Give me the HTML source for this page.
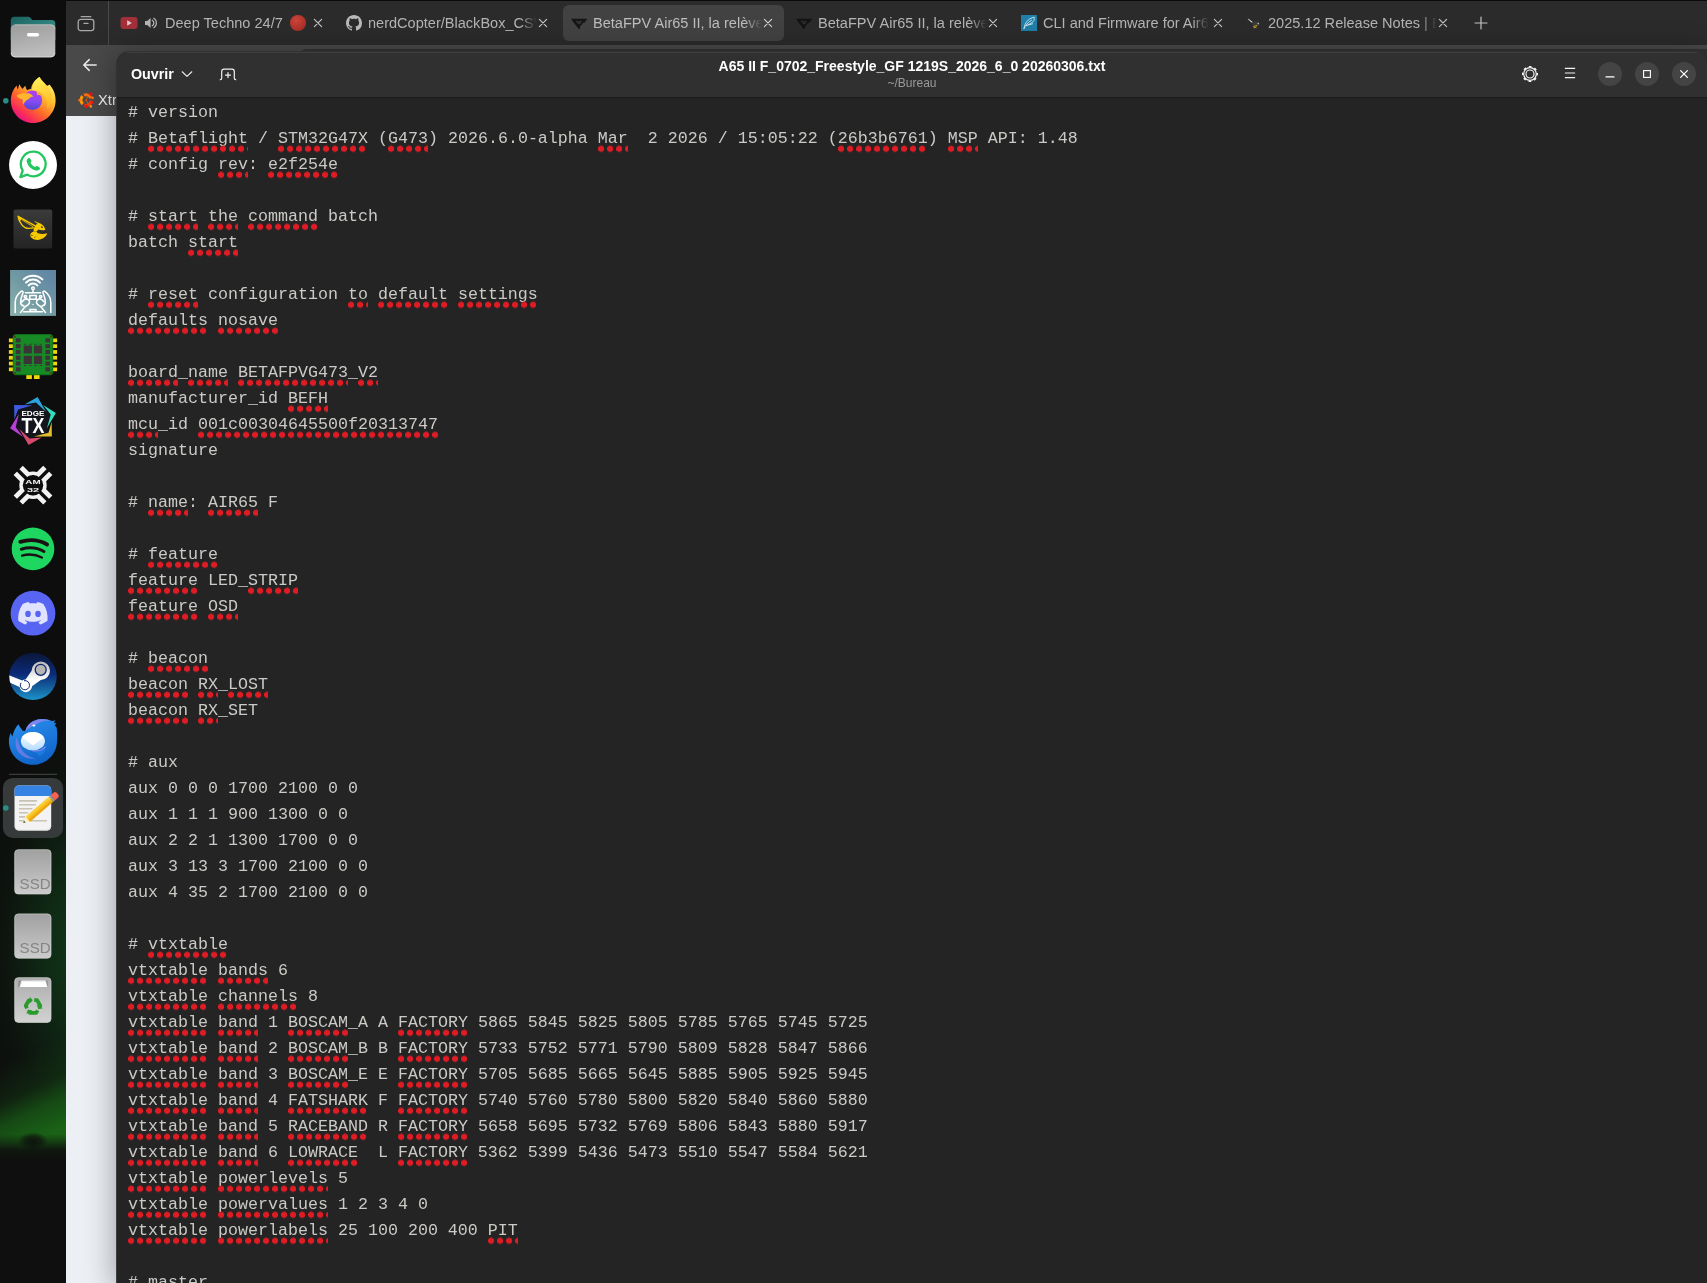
<!DOCTYPE html>
<html lang="fr">
<head>
<meta charset="utf-8">
<title>A65 II F_0702_Freestyle_GF 1219S_2026_6_0 20260306.txt</title>
<style>
*{box-sizing:border-box;margin:0;padding:0}
html,body{width:1707px;height:1283px;overflow:hidden;background:#0d0d0d}
body{position:relative;font-family:"Liberation Sans",sans-serif;color:#fff}
.abs{position:absolute}
/* ---------- dock ---------- */
#dock{will-change:transform;position:absolute;left:0;top:0;width:66px;height:1283px;background:#0d0d0d;overflow:hidden}
#dock .glow{position:absolute;left:0;top:0;width:66px;height:1283px;
 background:
  radial-gradient(ellipse 15px 9px at 33px 1141px, rgba(13,15,13,.9) 0, rgba(13,15,13,.6) 55%, rgba(13,15,13,0) 100%),
  linear-gradient(180deg, rgba(14,15,14,0) 1134px, rgba(14,15,14,.9) 1150px, #0e0f0e 1162px, #0e0f0e 1283px),
  linear-gradient(155deg, rgba(22,80,22,0) 81%, rgba(22,78,22,.3) 84%, rgba(23,84,22,.85) 85.800%, rgba(26,98,22,1) 88%, rgba(26,100,22,1) 100%),
  radial-gradient(ellipse 120px 230px at 86px 950px, rgba(17,62,26,.95) 0, rgba(15,48,22,.72) 40%, rgba(13,30,16,.36) 70%, rgba(14,14,14,0) 100%);}
.ic{position:absolute;left:9px;width:48px;height:48px}
.ic svg{display:block;width:48px;height:48px}
/* ---------- firefox ---------- */
#ff{will-change:transform;position:absolute;left:66px;top:0;width:1641px;height:1283px;background:#eceff4;overflow:hidden}
#tabbar{position:absolute;left:0;top:0;width:1641px;height:45px;background:#2b2b2b;border-top:1px solid #0a0a0a}
#navbar{position:absolute;left:0;top:45px;width:1641px;height:71px;background:#494949}
.tab{position:absolute;top:0;height:45px;font-size:14.55px;color:#b4b4b4;white-space:nowrap}
.tab .t{position:absolute;top:13px;left:0;line-height:18px;overflow:hidden}
.tabx{position:absolute;top:17px;width:10px;height:10px}
.fade{-webkit-mask-image:linear-gradient(90deg,#000 0,#000 90%,transparent 100%);mask-image:linear-gradient(90deg,#000 0,#000 90%,transparent 100%)}
/* ---------- editor ---------- */
#ed{will-change:transform;position:absolute;left:117px;top:52px;width:1590px;height:1231px;background:#242424;border-radius:12px 12px 0 0;overflow:hidden;
 box-shadow:0 0 0 1px rgba(50,50,50,.92),0 3px 30px 3px rgba(0,0,0,.33)}
#hb{position:absolute;left:0;top:0;width:1590px;height:46px;background:#303030;border-bottom:1px solid #1c1c1c;box-shadow:inset 0 1px 0 rgba(255,255,255,.07)}
#title{position:absolute;left:0;width:1590px;top:6px;text-align:center;font-weight:bold;font-size:14px;line-height:17px;color:#fff;white-space:nowrap}
#sub{position:absolute;left:0;width:1590px;top:24px;text-align:center;font-size:12px;line-height:14px;color:#9a9a9a}
#code{transform:translateY(.3px);position:absolute;left:11px;top:48px;font-family:"Liberation Mono",monospace;font-size:16.667px;color:#cbcac6}
.ln{height:26px;line-height:26px;white-space:pre}
.ln u{text-decoration:none;position:relative;display:inline-block;height:26px;vertical-align:top}
.ln u::after{content:"";position:absolute;left:0;right:0;top:18.900px;height:7px;
 background:radial-gradient(circle at 3.1px 3.5px,#e01b24 0,#e01b24 2.75px,rgba(224,27,36,0) 3.45px) 0 0/9px 7px repeat-x}
.wb{position:absolute;top:10px;width:24px;height:24px;border-radius:12px;background:#444444}
</style>
</head>
<body>
<div id="dock"><div class="glow"></div>
<svg class="abs" style="left:0;top:0" width="66" height="1283" viewBox="0 0 66 1283" font-family="Liberation Sans, sans-serif">
<defs>
 <linearGradient id="gFoldB" x1="0" y1="0" x2="1" y2="1"><stop offset="0" stop-color="#1b615e"/><stop offset="1" stop-color="#3f9c97"/></linearGradient>
 <linearGradient id="gFoldF" x1="0" y1="0" x2="0.3" y2="1"><stop offset="0" stop-color="#9b9b9b"/><stop offset="1" stop-color="#bdbdbd"/></linearGradient>
 <linearGradient id="gFx" x1="0.85" y1="0.1" x2="0.2" y2="0.95"><stop offset="0" stop-color="#fff36a"/><stop offset="0.3" stop-color="#ffbd2e"/><stop offset="0.6" stop-color="#ff6a2a"/><stop offset="0.85" stop-color="#f92a5a"/><stop offset="1" stop-color="#e3118d"/></linearGradient>
 <linearGradient id="gFxFlame" x1="0.3" y1="0" x2="0.7" y2="1"><stop offset="0" stop-color="#fff45a"/><stop offset="1" stop-color="#ffb727"/></linearGradient>
 <linearGradient id="gFxGlobe" x1="0.5" y1="0" x2="0.4" y2="1"><stop offset="0" stop-color="#b23df0"/><stop offset="0.5" stop-color="#8b4af5"/><stop offset="1" stop-color="#4f47cf"/></linearGradient>
 <linearGradient id="gBf" x1="0" y1="0" x2="0" y2="1"><stop offset="0" stop-color="#3b3b3b"/><stop offset="1" stop-color="#242424"/></linearGradient>
 <linearGradient id="gRc" x1="0" y1="1" x2="1" y2="0"><stop offset="0" stop-color="#8cb3ad"/><stop offset="0.5" stop-color="#7098a2"/><stop offset="1" stop-color="#5d83a6"/></linearGradient>
 <linearGradient id="gSteam" x1="0" y1="0" x2="0" y2="1"><stop offset="0" stop-color="#0a173a"/><stop offset="0.45" stop-color="#0c2a78"/><stop offset="0.75" stop-color="#15639f"/><stop offset="1" stop-color="#1c93cc"/></linearGradient>
 <linearGradient id="gSteamW" x1="0" y1="0" x2="0" y2="1"><stop offset="0" stop-color="#b9b9b9"/><stop offset="0.6" stop-color="#ffffff"/></linearGradient>
 <linearGradient id="gTb" x1="0.2" y1="0" x2="0.6" y2="1"><stop offset="0" stop-color="#2a8fee"/><stop offset="1" stop-color="#0f63c8"/></linearGradient>
 <linearGradient id="gEnv" x1="0" y1="0" x2="0" y2="1"><stop offset="0" stop-color="#ffffff"/><stop offset="1" stop-color="#b4dcff"/></linearGradient>
 <linearGradient id="gSsd" x1="0" y1="0" x2="0" y2="1"><stop offset="0" stop-color="#a0a0a0"/><stop offset="1" stop-color="#cbcbcb"/></linearGradient>
 <linearGradient id="gTrash" x1="0" y1="0" x2="0" y2="1"><stop offset="0" stop-color="#adadad"/><stop offset="1" stop-color="#d2d2d2"/></linearGradient>
 <linearGradient id="gPen" x1="0" y1="0" x2="1" y2="1"><stop offset="0" stop-color="#fbd03c"/><stop offset="0.5" stop-color="#f8c228"/><stop offset="0.51" stop-color="#eaa50a"/><stop offset="1" stop-color="#eaa50a"/></linearGradient>
</defs>
<!-- files -->
<g>
 <path d="M10.8 20.2a3.5 3.5 0 0 1 3.5-3.5h13.2c1.6 0 2.4.4 3.4 1.6l.9 1.1c.5.5 1 .7 1.8.7h18.2a3.5 3.5 0 0 1 3.5 3.5V40H10.8z" fill="url(#gFoldB)"/>
 <rect x="10.8" y="24.6" width="44.5" height="32.6" rx="4.2" fill="url(#gFoldF)"/>
 <path d="M14.8 24.9h36.5a3.7 3.7 0 0 1 3.7 3.7" stroke="#cdcdcd" stroke-width=".7" fill="none"/>
 <path d="M11.2 53a3.9 3.9 0 0 0 3.8 3.9h36a3.9 3.9 0 0 0 3.9-3.9" stroke="#dcdcdc" stroke-width=".8" fill="none"/>
 <rect x="26.9" y="32.9" width="12.2" height="3.6" rx="1.8" fill="#fff"/>
</g>
<!-- firefox -->
<g>
 <circle cx="5.800" cy="100.800" r="2.800" fill="#2a8d88"/>
 <path d="M39.600 77.100C41 80.500 44 82.500 46.500 85.500C47.500 85.800 48.600 85.600 49.400 84.600C53.400 88.800 55.600 94.500 55.600 100.500C55.600 113 45.500 123 33.200 123C20.800 123 10.800 113 10.800 100.500C10.800 95 12.800 89.500 16.600 85.500C16.800 87 17.200 88.300 18 89.500C18.300 87.300 18.800 85.600 19.500 84.200C20.200 86 21.200 87.600 22.600 89C23.200 87.800 24.200 86.600 25.400 85.800C25.600 87.500 26.200 89 27.200 90.300C28.400 89.600 29.800 89 31.200 88.800C31.600 84.400 35 79.500 39.600 77.100Z" fill="url(#gFx)"/>
 <path d="M39.600 77.100C41 80.500 44 82.500 46.500 85.500C49.800 89.400 51.600 93.800 51.400 98.600C51.300 102.800 49.600 106.400 46.600 109C48.400 104.400 47.600 99.400 44.600 95.800C42.400 93.200 39.400 91.400 36.200 90.800C34.800 90.500 33.400 90.500 32 90.700C32 85.600 35.200 79.700 39.600 77.100Z" fill="url(#gFxFlame)" opacity=".92"/>
 <circle cx="32.400" cy="100.300" r="9.700" fill="url(#gFxGlobe)"/>
 <path d="M16.500 95.800C19 93.400 23 92.700 26 93.500C28.500 92.500 31.200 93.500 33.600 96.600C31.200 96.800 29.700 97.800 28.500 99.200C26.100 100 24.300 102 23.700 104.600C22.700 102.800 22.500 101 22.900 99.400C20.400 99.200 18.200 97.900 16.500 95.800Z" fill="#ffb52e"/>
 <path d="M35.800 91.600C38.800 91.900 41.400 93.600 42.600 96C40.700 95 38.700 94.900 37.200 95.400C37.200 94 36.700 92.700 35.800 91.600Z" fill="#ffa62e"/>
</g>
<!-- whatsapp -->
<g>
 <circle cx="33" cy="165" r="24" fill="#fff"/>
 <path d="M33.300 151.700a12.300 12.300 0 1 1-6 23l-6.900 2.400 2.300-6.600a12.300 12.300 0 0 1 10.600-18.800z" fill="none" stroke="#22c55e" stroke-width="2.300" stroke-linejoin="round"/>
 <path d="M28.300 158.300c.5-.5 1.300-.5 1.700.1l1.300 2c.3.500.2 1.100-.2 1.500l-.7.700c.9 1.900 2.600 3.600 4.800 4.500l.8-.8c.4-.4 1-.4 1.500-.1l2 1.300c.6.400.7 1.200.2 1.700-1 1.100-2.500 1.700-4 1.300-4.400-1.100-8.100-4.800-9-9-.2-1.200.4-2.300 1.600-3.200z" fill="#22c55e"/>
</g>
<!-- betaflight -->
<g>
 <rect x="13.500" y="209.400" width="38.700" height="39.200" rx="2" fill="url(#gBf)"/>
 <g fill="none" stroke="#f6c900" stroke-linecap="round" stroke-linejoin="round">
  <path d="M18.100 216.300L35.200 225.900M18.100 216.300C18.600 219 19.200 220.500 19.900 221.700C21.200 224.400 23 226.600 25.100 227.600C27.600 228.800 30.400 228.500 33.400 227.900" stroke-width="1.350"/>
  <path d="M21.600 219.600L33.200 226.900" stroke-width=".8"/>
  <path d="M35 221.600L38.400 223.200" stroke-width=".9"/>
 </g>
 <path d="M18.100 216.300l3.600 1.600-1.700 3.500z" fill="#f6c900"/>
 <path d="M37.800 222.800C41.600 223.200 44.400 226 45.300 229.700C43 230.500 40.600 230.300 38.500 229.500L36.600 231.200L33.600 231.200C33.400 229.600 33.800 228.200 34.600 227C35.600 225.400 36.600 224.200 37.800 222.800Z" fill="#f6c900"/>
 <ellipse cx="41.900" cy="227.100" rx="1.050" ry=".7" fill="#2a2a2a" transform="rotate(25 41.900 227.100)"/>
 <path d="M30.300 234.600C30.800 232.200 33.400 230.800 36.400 231.200L37.400 233C40.600 234.200 44.200 234.200 47.200 233.300C46 237.200 42 239.900 37.400 239.900C33.300 239.900 29.800 237.800 30.300 234.600Z" fill="#f6c900"/>
 <path d="M31 235.300l1.700.2M34.400 237.800l1.300-1.300" stroke="#3a3207" stroke-width=".7" fill="none"/>
</g>
<!-- rc -->
<g>
 <rect x="10.100" y="270" width="45.900" height="45.900" fill="url(#gRc)"/>
 <g fill="none" stroke="#fff" stroke-width="1.550" stroke-linecap="round" stroke-linejoin="round">
  <path stroke-width="2" d="M23.600 279.400a13.600 13.600 0 0 1 18.800 0M26 282.600a9.600 9.600 0 0 1 14 0M28.600 285.400a5.800 5.800 0 0 1 8.800 0"/>
  <circle cx="33" cy="288.200" r="1.300"/><path d="M33 289.700v2.600"/>
  <path d="M25.400 292.700h15.200"/>
  <rect x="29.800" y="295.400" width="6.400" height="3.800"/>
  <circle cx="25.400" cy="296.600" r="1.200"/><circle cx="40.600" cy="296.600" r="1.200"/>
  <path d="M15.200 312.400v-9.600c0-4.600 2.400-8.800 6-11.400 1-.7 2.200.3 1.800 1.400-1.500 3.700-2.300 6-2.400 9.400 0 2.100 1.200 3.400 3.300 3.800"/>
  <path d="M50.800 312.400v-9.600c0-4.600-2.400-8.800-6-11.400-1-.7-2.200.3-1.800 1.400 1.500 3.700 2.300 6 2.400 9.400 0 2.100-1.200 3.400-3.300 3.800"/>
  <path d="M20.600 312.400l4.200-5.400 3.400-2.400c1.800-1.300 1.800-4-.1-5.100-1.500-.9-3.400-.6-4.800.9l-1.400 1.500"/>
  <path d="M45.400 312.400l-4.200-5.400-3.400-2.400c-1.800-1.300-1.800-4 .1-5.100 1.500-.9 3.400-.6 4.800.9l1.400 1.500"/>
  <path d="M23.600 311.800h18.800M30 311.400v-1.800h6v1.800"/>
 </g>
 <circle cx="33" cy="304.400" r=".7" fill="#fff"/>
</g>
<!-- pcb -->
<g>
 <g fill="#f2d80a"><rect x="8.900" y="338.500" width="4.400" height="3.700"/><rect x="8.900" y="344.300" width="4.400" height="3.700"/><rect x="8.900" y="350.100" width="4.400" height="3.700"/><rect x="8.900" y="355.900" width="4.400" height="3.700"/><rect x="8.900" y="361.700" width="4.400" height="3.700"/><rect x="8.900" y="367.500" width="4.400" height="3.700"/>
 <rect x="52.700" y="338.500" width="4.400" height="3.700"/><rect x="52.700" y="344.300" width="4.400" height="3.700"/><rect x="52.700" y="350.100" width="4.400" height="3.700"/><rect x="52.700" y="355.900" width="4.400" height="3.700"/><rect x="52.700" y="361.700" width="4.400" height="3.700"/><rect x="52.700" y="367.500" width="4.400" height="3.700"/>
 <rect x="26.300" y="374.600" width="5.600" height="4.400"/><rect x="33.900" y="374.600" width="5.700" height="4.400"/></g>
 <rect x="13.200" y="334.600" width="39.600" height="40.200" rx="2.600" fill="#178a25" stroke="#0f7a1c" stroke-width=".8"/>
 <g fill="#3b3337"><rect x="15.900" y="338.300" width="4.600" height="4.100"/><rect x="15.900" y="344.100" width="4.600" height="4.100"/><rect x="15.900" y="349.900" width="4.600" height="4.100"/><rect x="15.900" y="355.700" width="4.600" height="4.100"/><rect x="15.900" y="361.500" width="4.600" height="4.100"/><rect x="15.900" y="367.300" width="4.600" height="4.100"/>
 <rect x="45.400" y="338.300" width="4.600" height="4.100"/><rect x="45.400" y="344.100" width="4.600" height="4.100"/><rect x="45.400" y="349.900" width="4.600" height="4.100"/><rect x="45.400" y="355.700" width="4.600" height="4.100"/><rect x="45.400" y="361.500" width="4.600" height="4.100"/><rect x="45.400" y="367.300" width="4.600" height="4.100"/>
 <rect x="23.700" y="345.600" width="8.200" height="7.800"/><rect x="34" y="345.600" width="8.200" height="7.800"/><rect x="23.700" y="355.800" width="8.200" height="8.200"/><rect x="34" y="355.800" width="8.200" height="8.200"/>
 <rect x="23.900" y="343.800" width="2.200" height=".9"/><rect x="29.300" y="343.800" width="2.200" height=".9"/><rect x="34.300" y="343.800" width="2.200" height=".9"/><rect x="39.700" y="343.800" width="2.200" height=".9"/>
 <rect x="23.900" y="365" width="2.200" height=".9"/><rect x="29.300" y="365" width="2.200" height=".9"/><rect x="34.300" y="365" width="2.200" height=".9"/><rect x="39.700" y="365" width="2.200" height=".9"/></g>
 <g fill="#5c3a10"><circle cx="15" cy="336.500" r="1.100"/><circle cx="51" cy="336.500" r="1.100"/><circle cx="15" cy="373" r="1.100"/><circle cx="51" cy="373" r="1.100"/></g>
</g>
<!-- edgetx -->
<g>
 <path d="M36 402.400L45 409 50.700 414.600 47.800 425.500 48.500 432.700 38 436.400 29.500 438.500 21.500 433 15.700 427.200 17.800 416 18.200 409.400 26 405z" fill="#14151c"/>
 <path d="M37.600 397L24.500 404.400 36 402.400 46.200 412.100z" fill="#2ba3dc"/>
 <path d="M55.900 413L43.100 405.100 50.700 414.600 46.900 428.200z" fill="#33dcbd"/>
 <path d="M51.900 436.500L51.600 421.800 48.500 432.700 33.800 436.500z" fill="#e0bd2e"/>
 <path d="M28.600 444.900L19.300 429.100 29.500 438.500 41.700 437.400z" fill="#d54b6c"/>
 <path d="M10.100 428.200L18.900 413.700 15.700 427.200 23.200 437z" fill="#b83fd8"/>
 <path d="M14.100 405.100L32.200 405.300 18.200 409.400 14.400 419.600z" fill="#3d5ae0"/>
 <text x="32.900" y="415.500" font-size="7.200" font-weight="bold" fill="#fff" text-anchor="middle" textLength="23" lengthAdjust="spacingAndGlyphs">EDGE</text>
 <text x="33" y="432.900" font-size="21.400" font-weight="bold" fill="#fff" text-anchor="middle" textLength="22.800" lengthAdjust="spacingAndGlyphs">TX</text>
</g>
<!-- am32 -->
<g>
 <path d="M18.200 470.400l29.600 29.600M47.800 470.400l-29.600 29.600" stroke="#f2f2f2" stroke-width="13"/>
 <circle cx="33" cy="485.200" r="11.900" fill="none" stroke="#f2f2f2" stroke-width="3.600"/>
 <path d="M11 463.200l44 44M55 463.200l-44 44" stroke="#0d0d0d" stroke-width="3.4"/>
 <circle cx="33" cy="485.200" r="10.200" fill="#0d0d0d"/>
 <text x="33" y="483.800" font-size="6.200" font-weight="bold" fill="#f2f2f2" text-anchor="middle" textLength="15.300" lengthAdjust="spacingAndGlyphs">AM</text>
 <text x="33" y="491.700" font-size="5.800" font-weight="bold" fill="#f2f2f2" text-anchor="middle" textLength="12.200" lengthAdjust="spacingAndGlyphs">32</text>
</g>
<!-- spotify -->
<g>
 <circle cx="33" cy="548.900" r="21.300" fill="#1ed760"/>
 <g fill="none" stroke="#1a1114" stroke-linecap="round"><path d="M20.300 541.800c9-2.600 19.400-1.700 26.800 2.700" stroke-width="3.800"/><path d="M21.300 549.200c7.700-2.200 16.400-1.300 22.700 2.300" stroke-width="3"/><path d="M22.100 555.600c6.500-1.800 13.800-1.200 19.800 2" stroke-width="2.300"/></g>
</g>
<!-- discord -->
<g>
 <circle cx="33" cy="613.200" r="22.400" fill="#5865f2"/>
 <path d="M43.400 603.900c-1.900-.9-4-1.500-6.100-1.900-.3.500-.6 1.100-.8 1.600-2.300-.3-4.600-.3-6.900 0-.2-.5-.5-1.100-.8-1.600-2.100.4-4.200 1-6.100 1.900-3.900 5.700-4.900 11.300-4.400 16.800 2.600 1.900 5.100 3 7.500 3.800.6-.8 1.100-1.700 1.600-2.600-.9-.3-1.700-.7-2.500-1.200.2-.2.400-.3.600-.5 4.800 2.200 10 2.200 14.800 0 .2.200.4.300.6.500-.8.500-1.600.9-2.500 1.200.5.900 1 1.800 1.600 2.600 2.400-.8 5-1.900 7.500-3.800.6-6.400-1-11.900-4.100-16.800z" fill="#e0e3ff"/>
 <ellipse cx="28" cy="613.900" rx="2.800" ry="3.100" fill="#5865f2"/><ellipse cx="38" cy="613.900" rx="2.800" ry="3.100" fill="#5865f2"/>
</g>
<!-- steam -->
<g>
 <circle cx="33" cy="676.400" r="23.700" fill="url(#gSteam)"/>
 <clipPath id="cSteam"><circle cx="33" cy="676.400" r="23.700"/></clipPath>
 <g clip-path="url(#cSteam)">
  <path d="M5 673.500l17.200 7.100a6.100 6.100 0 0 1 3.400-1l6-8.800a9.200 9.200 0 1 1 9.200 9.200l-8.700 6.200a6.300 6.300 0 0 1-12.500.7L5 680.500z" fill="url(#gSteamW)"/>
  <circle cx="40.700" cy="669.800" r="5.500" fill="#b5b5b5" stroke="#0d2470" stroke-width="1.300"/>
  <path d="M21 682.800a4.600 4.600 0 1 0 3-2.100" fill="none" stroke="#0d2470" stroke-width="1"/>
 </g>
</g>
<!-- thunderbird -->
<g>
 <path d="M18.400 724.300C19.500 726.500 21.500 729 22.700 730.800L25.400 731C26.500 724.500 33 719.400 41 719C45 718.800 49 719.600 52 721L55.600 720.600L53.800 722.800L56.400 723.600L54.600 725.200L56.600 727.400C57.400 731 57.400 736 57 741.700C56.600 754.500 46 764.800 32.900 764.800C19.600 764.800 8.900 754.400 8.900 741.200C8.900 738.400 9.500 735.600 10.600 733L12.400 736.400C13.400 731.600 15.400 727.600 18.400 724.300Z" fill="url(#gTb)"/>
 <path d="M25.400 731.200C26.400 724.800 32.800 719.600 41 719.200C44.400 719 47.600 719.500 50.400 720.500C44.600 720.300 39.600 721.600 36 724.600C32.800 726 28.200 728 25.400 731.200Z" fill="#8f86ee" opacity=".85"/>
 <ellipse cx="33.900" cy="725.600" rx="1.500" ry="1" fill="#fff"/>
 <path d="M16.600 737.500C14.600 743 15.600 749.400 19.800 753.800C23.800 758 30 759.600 35.400 758.200C30.400 757.600 26 755.200 23 751.400C20 747.600 18.800 743 16.600 737.500Z" fill="#7a7fe8" opacity=".75"/>
 <ellipse cx="32.900" cy="741.200" rx="12" ry="9.300" fill="url(#gEnv)"/>
 <path d="M22 737.300L32.900 745.600 43.800 737.300C41.800 734 37.700 731.900 32.900 731.900C28.100 731.900 24 734 22 737.300Z" fill="#fff"/>
 <path d="M46.400 746C44 750 39.200 752.400 33.200 751.400C36.200 752.400 38 754 38.800 756.200C43.400 754.400 46.200 750.600 46.400 746Z" fill="#1a7be0"/>
 <path d="M32.600 750.600C37.400 751.600 42.400 750 45.600 746.600" stroke="#9a8cf0" stroke-width="1.100" fill="none" opacity=".95"/>
</g>
<!-- separator + active -->
<rect x="8.900" y="773.800" width="48.200" height="1" fill="#454545"/>
<rect x="2.900" y="777.900" width="60.200" height="60" rx="10" fill="#373a3a"/>
<circle cx="5.800" cy="808" r="2.800" fill="#2a8d88"/>
<!-- text editor -->
<g>
 <rect x="14.500" y="785.500" width="36.700" height="44.900" rx="4.200" fill="#f3f3f3"/>
 <path d="M14.500 795.900v-6.200a4.200 4.200 0 0 1 4.200-4.200h28.300a4.200 4.200 0 0 1 4.200 4.200v6.200z" fill="#3584e4"/>
 <path d="M15 826.400a3.900 3.900 0 0 0 3.800 3.900h28a3.900 3.900 0 0 0 3.900-3.900" stroke="#d2d2d2" stroke-width=".8" fill="none"/>
 <g stroke="#c9c3b5" stroke-width="1.600"><path d="M19 800.900h17.900M19 804.800h17M19 808.800h13.400M19 812.800h9M19 816.900h6M19 820.700h27.900"/></g>
 <g transform="translate(23.200 823.100) rotate(-40.600)">
  <path d="M0 0l6.200-3.400v6.800z" fill="#fdeec0"/>
  <path d="M0 0l2.100-1.150v2.300z" fill="#3a3a3a"/>
  <rect x="6.200" y="-3.400" width="30.500" height="3.400" fill="#fbcf3a"/><rect x="6.200" y="0" width="30.500" height="3.400" fill="#eaa60c"/>
  <rect x="6.200" y="-1.100" width="30.500" height="2.200" fill="#f6bd1c"/>
  <rect x="36.700" y="-3.400" width="2.300" height="6.800" fill="#9a9996"/>
  <path d="M39 -3.400h3.600a2.600 2.600 0 0 1 2.600 2.600v1.600a2.600 2.600 0 0 1-2.600 2.600H39z" fill="#f66151"/>
 </g>
</g>
<!-- ssd -->
<g>
 <rect x="14.700" y="849.700" width="36.300" height="44.300" rx="3.600" fill="url(#gSsd)" stroke="#d3d3d3" stroke-width=".7"/>
 <text x="19.600" y="888.500" font-size="15.100" fill="#858585">SSD</text>
 <rect x="14.700" y="913.900" width="36.300" height="44.300" rx="3.600" fill="url(#gSsd)" stroke="#d3d3d3" stroke-width=".7"/>
 <text x="19.600" y="952.600" font-size="15.100" fill="#858585">SSD</text>
</g>
<!-- trash -->
<g>
 <rect x="14.700" y="977.700" width="36.300" height="44.700" rx="3.600" fill="url(#gTrash)" stroke="#d8d8d8" stroke-width=".7"/>
 <path d="M18.600 980.400h28.900l.6 6.700H18z" fill="#8e8e8e"/>
 <path d="M21.300 980.600l24.300-.4 2 6.900H19.500z" fill="#e9e9e9"/>
 <path d="M22.600 981.600l22.600.4 1.800 5.100H20.300z" fill="#fff"/>
 <g fill="#2b9a2d" transform="translate(33 1006.300) scale(1.2)">
  <g><path d="M1 -5.060L3.420 -5.060 6.080 -0.440 5.600 0.400" fill="none" stroke="#2b9a2d" stroke-width="3.100" stroke-linejoin="round"/><path d="M4.460 2.370L8.360 1.610 3.160 -1.370Z"/></g><g transform="rotate(120)"><path d="M1 -5.060L3.420 -5.060 6.080 -0.440 5.600 0.400" fill="none" stroke="#2b9a2d" stroke-width="3.100" stroke-linejoin="round"/><path d="M4.460 2.370L8.360 1.610 3.160 -1.370Z"/></g><g transform="rotate(240)"><path d="M1 -5.060L3.420 -5.060 6.080 -0.440 5.600 0.400" fill="none" stroke="#2b9a2d" stroke-width="3.100" stroke-linejoin="round"/><path d="M4.460 2.370L8.360 1.610 3.160 -1.370Z"/></g>
 </g>
</g>
</svg>

</div>
<div id="ff">
 <div id="tabbar">
  <svg class="abs" style="left:11px;top:14px" width="18" height="17" viewBox="0 0 18 17" fill="none" stroke="#a9a9a9" stroke-width="1.3" stroke-linecap="round" stroke-linejoin="round"><path d="M4.2 1.6h9.6"/><rect x="1.2" y="4.4" width="15.6" height="11.2" rx="2.4"/><path d="M7 8.4h4"/></svg>
  <div class="abs" style="left:42px;top:0;width:1px;height:44px;background:#4a4a4a"></div>
  <div class="abs" style="left:497px;top:4px;width:221px;height:36px;border-radius:6px;background:#424242"></div>

  <div class="tab" style="left:47px;width:225px">
   <svg class="abs" style="left:7px;top:15px" width="18" height="14" viewBox="0 0 18 14"><rect x="0.5" y="1" width="17" height="12" rx="3.2" fill="#a33038"/><path d="M7.2 4.3l4.6 2.7-4.6 2.7z" fill="#e6c9cb"/></svg>
   <svg class="abs" style="left:31px;top:15px" width="14" height="14" viewBox="0 0 14 14" fill="#b4b4b4"><path d="M1 5h2.2L6.6 2v10L3.2 9H1z"/><path d="M8.3 4.2a3.3 3.3 0 0 1 0 5.6M9.9 2.3a5.6 5.6 0 0 1 0 9.4" fill="none" stroke="#b4b4b4" stroke-width="1.3" stroke-linecap="round"/></svg>
   <div class="t" style="left:52px;width:122px">Deep Techno 24/7</div>
   <div class="abs" style="left:177px;top:14px;width:15.5px;height:15.5px;border-radius:50%;background:radial-gradient(circle at 38% 35%,#c9463b 0,#b3342c 55%,#8a2620 100%)"></div>
   <svg class="tabx" style="left:200px" viewBox="0 0 10 10"><path d="M1.4 1.4l7.2 7.2M8.6 1.4l-7.2 7.2" stroke="#c4c4c4" stroke-width="1.2" stroke-linecap="round"/></svg>
  </div>

  <div class="tab" style="left:272px;width:225px">
   <svg class="abs" style="left:8px;top:14px" width="16" height="16" viewBox="0 0 16 16" fill="#b9b9b9"><path d="M8 0C3.58 0 0 3.58 0 8c0 3.54 2.29 6.53 5.47 7.59.4.07.55-.17.55-.38 0-.19-.01-.82-.01-1.49-2.01.37-2.53-.49-2.69-.94-.09-.23-.48-.94-.82-1.13-.28-.15-.68-.52-.01-.53.63-.01 1.08.58 1.23.82.72 1.21 1.87.87 2.33.66.07-.52.28-.87.51-1.07-1.78-.2-3.64-.89-3.64-3.95 0-.87.31-1.59.82-2.15-.08-.2-.36-1.02.08-2.12 0 0 .67-.21 2.2.82.64-.18 1.32-.27 2-.27s1.36.09 2 .27c1.53-1.04 2.2-.82 2.2-.82.44 1.1.16 1.92.08 2.12.51.56.82 1.27.82 2.15 0 3.07-1.87 3.75-3.65 3.95.29.25.54.73.54 1.48 0 1.07-.01 1.93-.01 2.2 0 .21.15.46.55.38A8.01 8.01 0 0 0 16 8c0-4.42-3.58-8-8-8z"/></svg>
   <div class="t fade" style="left:30px;max-width:169px">nerdCopter/BlackBox_CSV</div>
   <svg class="tabx" style="left:200px" viewBox="0 0 10 10"><path d="M1.4 1.4l7.2 7.2M8.6 1.4l-7.2 7.2" stroke="#c4c4c4" stroke-width="1.2" stroke-linecap="round"/></svg>
  </div>

  <div class="tab" style="left:497px;width:225px">
   <svg class="abs" style="left:8px;top:16px" width="17" height="13" viewBox="0 0 17 13"><path d="M0 1.800h16.300l-2.600 3.600-1.800.4-1.200 2.200-1 .2L8.200 12.400 2.600 5.400z" fill="#151515"/><path d="M4.600 4.200l1.600-.6 1.400.8 1.600-.8 1.600.6-1 2.600-2.400.8z" fill="#333"/></svg>
   <div class="t fade" style="left:30px;max-width:169px;color:#bdbdbd">BetaFPV Air65 II, la relève</div>
   <svg class="tabx" style="left:200px" viewBox="0 0 10 10"><path d="M1.4 1.4l7.2 7.2M8.6 1.4l-7.2 7.2" stroke="#d0d0d0" stroke-width="1.2" stroke-linecap="round"/></svg>
  </div>

  <div class="tab" style="left:722px;width:225px">
   <svg class="abs" style="left:8px;top:16px" width="17" height="13" viewBox="0 0 17 13"><path d="M0 1.800h16.300l-2.600 3.600-1.800.4-1.200 2.200-1 .2L8.200 12.400 2.600 5.400z" fill="#131313"/><path d="M4.600 4.200l1.600-.6 1.400.8 1.600-.8 1.600.6-1 2.600-2.400.8z" fill="#2a2a2a"/></svg>
   <div class="t fade" style="left:30px;max-width:169px">BetaFPV Air65 II, la relève</div>
   <svg class="tabx" style="left:200px" viewBox="0 0 10 10"><path d="M1.4 1.4l7.2 7.2M8.6 1.4l-7.2 7.2" stroke="#c4c4c4" stroke-width="1.2" stroke-linecap="round"/></svg>
  </div>

  <div class="tab" style="left:947px;width:225px">
   <svg class="abs" style="left:8px;top:14px" width="16" height="16" viewBox="0 0 16 16"><rect width="16" height="16" fill="#1f7fa8"/><path d="M3 13.5C4 8 6.5 3.6 13.2 2.2c.6 3.3-1.6 6-6 7.4M3 13.5c1.2-2.8 3.4-5.6 7.6-8.4M5 10.6l6.6-1.8" stroke="#d6e8f0" stroke-width=".9" fill="none" stroke-linecap="round"/></svg>
   <div class="t fade" style="left:30px;max-width:169px">CLI and Firmware for Air6</div>
   <svg class="tabx" style="left:200px" viewBox="0 0 10 10"><path d="M1.4 1.4l7.2 7.2M8.6 1.4l-7.2 7.2" stroke="#c4c4c4" stroke-width="1.2" stroke-linecap="round"/></svg>
  </div>

  <div class="tab" style="left:1172px;width:225px">
   <svg class="abs" style="left:8px;top:14px" width="16" height="16" viewBox="0 0 16 16"><path d="M1.2 3.2l5.4 3.6-.8 1.2z" fill="#9a9a9a"/><path d="M2.4 4.2l4 3" stroke="#c9c9c9" stroke-width="1"/><path d="M6.4 7.4c1.6-1.4 4.6-1.6 6.4-.2l1.6 1-1.4.6.8 1.6-2.2.2-1 2.4-2.6.4-1.2-2.6z" fill="#3a3a3a"/><path d="M7.2 11.6l4-1.2M7.6 12.8l3-.8" stroke="#c79a1f" stroke-width="1"/><circle cx="12.2" cy="8.6" r=".8" fill="#bdbdbd"/></svg>
   <div class="t fade" style="left:30px;max-width:169px">2025.12 Release Notes | B</div>
   <svg class="tabx" style="left:200px" viewBox="0 0 10 10"><path d="M1.4 1.4l7.2 7.2M8.6 1.4l-7.2 7.2" stroke="#c4c4c4" stroke-width="1.2" stroke-linecap="round"/></svg>
  </div>

  <svg class="abs" style="left:1408px;top:15px" width="14" height="14" viewBox="0 0 14 14"><path d="M7 1v12M1 7h12" stroke="#c4c4c4" stroke-width="1.2" stroke-linecap="round"/></svg>

 </div>
 <div id="navbar">
  <div class="abs" style="left:234px;top:4px;width:1407px;height:40px;border-radius:6px 0 0 6px;background:#333"></div>
  <svg class="abs" style="left:16px;top:12px" width="16" height="16" viewBox="0 0 16 16" fill="none" stroke="#ececec" stroke-width="1.5" stroke-linecap="round" stroke-linejoin="round"><path d="M14.2 8H2M7.2 2.6L1.8 8l5.4 5.4"/></svg>
  <svg class="abs" style="left:12px;top:47px" width="16" height="16" viewBox="0 0 16 16"><path d="M4.600 4.200A5.200 5.200 0 0 0 4.800 12" stroke="#ff9800" stroke-width="3" fill="none"/><path d="M6 3.100A5.200 5.200 0 0 1 12.900 6.400" stroke="#ff6a0a" stroke-width="2.900" fill="none"/><path d="M13.200 8.600A5.200 5.200 0 0 1 6.400 13" stroke="#f03a10" stroke-width="2.900" fill="none"/><circle cx="1.500" cy="8.100" r="1.300" fill="#ff6a10"/><circle cx="12.900" cy="2" r="1.700" fill="#ee1111"/><circle cx="14.600" cy="5.800" r="1.200" fill="#ff7a10"/><circle cx="14.400" cy="10.600" r="1.500" fill="#ee1515"/><circle cx="12.800" cy="14.400" r="1.300" fill="#ff9010"/><circle cx="8.400" cy="14.200" r="1.700" fill="#ee1111"/><path d="M9.500 4.800L8.300 8.200l2 3.600M8.300 8.200l-1.200.6" stroke="#f0500f" stroke-width=".9" fill="none" stroke-linecap="round"/></svg>
  <div class="abs" style="left:32px;top:46px;font-size:14.700px;line-height:18px;color:#f2f2f2;width:19px;overflow:hidden;white-space:nowrap">Xtr</div>

 </div>
</div>
<div id="ed">
 <div id="hb">
  <div id="title">A65 II F_0702_Freestyle_GF 1219S_2026_6_0 20260306.txt</div>
  <div id="sub">~/Bureau</div>
  <div class="abs" style="left:14px;top:14px;font-weight:bold;font-size:14.3px;line-height:17px;color:#fff">Ouvrir</div>
  <svg class="abs" style="left:64px;top:18px" width="12" height="8" viewBox="0 0 12 8" fill="none" stroke="#e8e8e8" stroke-width="1.2" stroke-linecap="round" stroke-linejoin="round"><path d="M1.2 1.8L6 6.4l4.8-4.6"/></svg>
  <svg class="abs" style="left:102px;top:15px" width="18" height="14" viewBox="0 0 18 14" fill="none" stroke="#f2f2f2" stroke-width="1.2" stroke-linecap="round" stroke-linejoin="round"><path d="M1.3 12.7c1 0 1.4-.5 1.4-1.4V4.4c0-1.4.9-2.3 2.3-2.3h8c1.4 0 2.3.9 2.3 2.3v6.9c0 .9.4 1.4 1.4 1.4"/><path d="M9 5.6v5M6.5 8.1h5"/></svg>
  <svg class="abs" style="left:1403px;top:12px" width="20" height="20" viewBox="0 0 20 20" fill="none" stroke="#f4f4f4"><circle cx="10" cy="10" r="7.300" stroke-width="1.500" stroke-dasharray="2.700 3.034" stroke-dashoffset="1.350"/><circle cx="10" cy="10" r="6.300" stroke-width="1.200"/><circle cx="10" cy="10" r="4" stroke-width="1.150"/></svg>
  <svg class="abs" style="left:1447px;top:15px" width="12" height="12" viewBox="0 0 12 12" stroke="#f4f4f4" stroke-width="1.1" stroke-linecap="round"><path d="M1.300 1.400h9.400M1.300 6h9.400M1.300 10.600h9.400"/></svg>
  <div class="wb" style="left:1481px"></div><div class="wb" style="left:1518px"></div><div class="wb" style="left:1555px"></div>
  <svg class="abs" style="left:1488px;top:17px" width="10" height="10" viewBox="0 0 10 10" stroke="#fff" stroke-width="1.2" stroke-linecap="round"><path d="M1 7.9h8"/></svg>
  <svg class="abs" style="left:1525px;top:17px" width="10" height="10" viewBox="0 0 10 10" fill="none" stroke="#fff" stroke-width="1.1"><rect x="1.6" y="1.6" width="6.8" height="6.8"/></svg>
  <svg class="abs" style="left:1562px;top:17px" width="10" height="10" viewBox="0 0 10 10" stroke="#fff" stroke-width="1.2" stroke-linecap="round"><path d="M1.6 1.6l6.8 6.8M8.4 1.6L1.6 8.4"/></svg>

 </div>
 <div id="code">
<div class="ln"># version</div>
<div class="ln"># <u>Betaflight</u> / <u>STM32G47X</u> (<u>G473</u>) 2026.6.0-alpha <u>Mar</u>  2 2026 / 15:05:22 (<u>26b3b6761</u>) <u>MSP</u> API: 1.48</div>
<div class="ln"># config <u>rev</u>: <u>e2f254e</u></div>
<div class="ln">&nbsp;</div>
<div class="ln"># <u>start</u> <u>the</u> <u>command</u> batch</div>
<div class="ln">batch <u>start</u></div>
<div class="ln">&nbsp;</div>
<div class="ln"># <u>reset</u> configuration <u>to</u> <u>default</u> <u>settings</u></div>
<div class="ln"><u>defaults</u> <u>nosave</u></div>
<div class="ln">&nbsp;</div>
<div class="ln"><u>board</u>_<u>name</u> <u>BETAFPVG473</u>_<u>V2</u></div>
<div class="ln">manufacturer_id <u>BEFH</u></div>
<div class="ln"><u>mcu</u>_id <u>001c00304645500f20313747</u></div>
<div class="ln">signature</div>
<div class="ln">&nbsp;</div>
<div class="ln"># <u>name</u>: <u>AIR65</u> F</div>
<div class="ln">&nbsp;</div>
<div class="ln"># <u>feature</u></div>
<div class="ln"><u>feature</u> LED_<u>STRIP</u></div>
<div class="ln"><u>feature</u> <u>OSD</u></div>
<div class="ln">&nbsp;</div>
<div class="ln"># <u>beacon</u></div>
<div class="ln"><u>beacon</u> <u>RX</u>_<u>LOST</u></div>
<div class="ln"><u>beacon</u> <u>RX</u>_SET</div>
<div class="ln">&nbsp;</div>
<div class="ln"># aux</div>
<div class="ln">aux 0 0 0 1700 2100 0 0</div>
<div class="ln">aux 1 1 1 900 1300 0 0</div>
<div class="ln">aux 2 2 1 1300 1700 0 0</div>
<div class="ln">aux 3 13 3 1700 2100 0 0</div>
<div class="ln">aux 4 35 2 1700 2100 0 0</div>
<div class="ln">&nbsp;</div>
<div class="ln"># <u>vtxtable</u></div>
<div class="ln"><u>vtxtable</u> <u>bands</u> 6</div>
<div class="ln"><u>vtxtable</u> <u>channels</u> 8</div>
<div class="ln"><u>vtxtable</u> <u>band</u> 1 <u>BOSCAM</u>_A A <u>FACTORY</u> 5865 5845 5825 5805 5785 5765 5745 5725</div>
<div class="ln"><u>vtxtable</u> <u>band</u> 2 <u>BOSCAM</u>_B B <u>FACTORY</u> 5733 5752 5771 5790 5809 5828 5847 5866</div>
<div class="ln"><u>vtxtable</u> <u>band</u> 3 <u>BOSCAM</u>_E E <u>FACTORY</u> 5705 5685 5665 5645 5885 5905 5925 5945</div>
<div class="ln"><u>vtxtable</u> <u>band</u> 4 <u>FATSHARK</u> F <u>FACTORY</u> 5740 5760 5780 5800 5820 5840 5860 5880</div>
<div class="ln"><u>vtxtable</u> <u>band</u> 5 <u>RACEBAND</u> R <u>FACTORY</u> 5658 5695 5732 5769 5806 5843 5880 5917</div>
<div class="ln"><u>vtxtable</u> <u>band</u> 6 <u>LOWRACE</u>  L <u>FACTORY</u> 5362 5399 5436 5473 5510 5547 5584 5621</div>
<div class="ln"><u>vtxtable</u> <u>powerlevels</u> 5</div>
<div class="ln"><u>vtxtable</u> <u>powervalues</u> 1 2 3 4 0</div>
<div class="ln"><u>vtxtable</u> <u>powerlabels</u> 25 100 200 400 <u>PIT</u></div>
<div class="ln">&nbsp;</div>
<div class="ln"># <u>master</u></div>
 </div>
</div>
</body>
</html>
